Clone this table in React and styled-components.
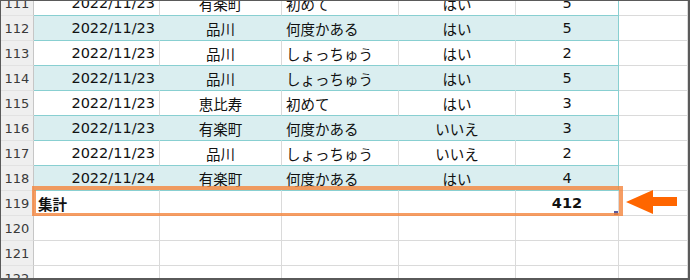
import React from "react";
import styled, { createGlobalStyle } from "styled-components";

const TEAL = "#88cfd1";
const BAND = "#daeef0";
const GRID = "#dadada";

const GlobalStyle = createGlobalStyle`
  html, body {
    margin: 0;
    padding: 0;
    background: #fff;
  }
  body {
    font-family: "DejaVu Sans", "Noto Sans CJK JP", sans-serif;
  }
`;

const Frame = styled.div`
  width: 690px;
  height: 280px;
  box-sizing: border-box;
  border: solid #5a5a5a;
  border-width: 1px 2px 2px 1px;
  overflow: hidden;
  background: #fff;
`;

const Sheet = styled.div`
  margin-top: -10px;
`;

const Row = styled.div`
  display: grid;
  grid-template-columns: 33px 126px 122px 117px 117px 103px 1fr;
  height: 25px;
  position: relative;
`;

const RowHead = styled.div`
  box-sizing: border-box;
  background: #efefef;
  border-right: 1px solid #c6c6c6;
  border-bottom: 1px solid #e2e2e2;
  display: flex;
  align-items: center;
  justify-content: center;
  font-size: 13px;
  color: #3a3a3a;
`;

const justify = { left: "flex-start", center: "center", right: "flex-end" };

const Cell = styled.div`
  box-sizing: border-box;
  background: ${(p) => (p.$band ? BAND : "#fff")};
  border-right: 1px solid
    ${(p) => (p.$edge ? TEAL : p.$band ? BAND : GRID)};
  border-bottom: 1px solid ${(p) => (p.$table ? TEAL : GRID)};
  display: flex;
  align-items: center;
  justify-content: ${(p) => justify[p.$align || "left"]};
  padding: 0 4px;
  font-size: 14.5px;
  font-weight: ${(p) => (p.$bold ? 700 : 400)};
  color: #111;
  white-space: nowrap;
  overflow: hidden;
`;

const Selection = styled.div`
  position: absolute;
  left: 31px;
  top: -5px;
  width: 591px;
  height: 31px;
  box-sizing: border-box;
  border: 4px solid rgba(244, 132, 60, 0.8);
  pointer-events: none;
`;

const FillHandle = styled.div`
  position: absolute;
  left: 613px;
  top: 20px;
  width: 4px;
  height: 4px;
  background: #5b5b9c;
`;

const Arrow = styled.svg`
  position: absolute;
  left: 625px;
  top: -1px;
`;

const rows = [
  ["2022/11/23", "有楽町", "初めて", "はい", "5"],
  ["2022/11/23", "品川", "何度かある", "はい", "5"],
  ["2022/11/23", "品川", "しょっちゅう", "はい", "2"],
  ["2022/11/23", "品川", "しょっちゅう", "はい", "5"],
  ["2022/11/23", "恵比寿", "初めて", "はい", "3"],
  ["2022/11/23", "有楽町", "何度かある", "いいえ", "3"],
  ["2022/11/23", "品川", "しょっちゅう", "いいえ", "2"],
  ["2022/11/24", "有楽町", "何度かある", "はい", "4"],
];

const aligns = ["right", "center", "left", "center", "center"];

const App = () => {
  return (
    <>
      <GlobalStyle />
      <Frame>
        <Sheet>
          {rows.map((r, i) => {
            const band = i % 2 === 1;
            return (
              <Row key={i}>
                <RowHead>{111 + i}</RowHead>
                {r.map((v, j) => (
                  <Cell key={j} $band={band} $table $edge={j === 4} $align={aligns[j]}>
                    {v}
                  </Cell>
                ))}
                <Cell />
              </Row>
            );
          })}
          <Row>
            <RowHead>119</RowHead>
            <Cell $bold>集計</Cell>
            <Cell />
            <Cell />
            <Cell />
            <Cell $bold $align="center">412</Cell>
            <Cell />
            <FillHandle />
            <Selection />
            <Arrow width="52" height="26" viewBox="0 0 52 26">
              <polygon points="0,12 27,0 27,7 51,7 51,16 27,16 27,24" fill="#ff6600" />
            </Arrow>
          </Row>
          {[120, 121, 122].map((n) => (
            <Row key={n}>
              <RowHead>{n}</RowHead>
              <Cell />
              <Cell />
              <Cell />
              <Cell />
              <Cell />
              <Cell />
            </Row>
          ))}
        </Sheet>
      </Frame>
    </>
  );
};

export default App;
